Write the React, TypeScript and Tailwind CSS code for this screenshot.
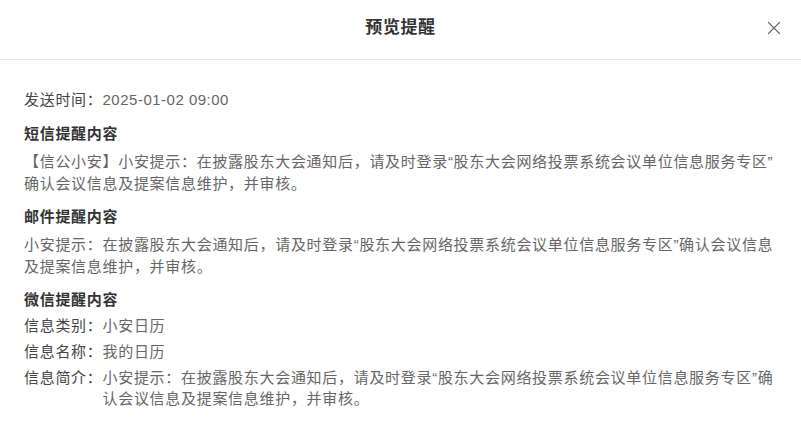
import { X } from "lucide-react";

const font = {
  fontFamily: '"Liberation Sans", "Noto Sans CJK SC", sans-serif',
};

const noticeHead = "小安提示：在披露股东大会通知后，请及时登录“股东大会网络投票系统会议单位信息服务专区”";
const noticeTail = "确认会议信息及提案信息维护，并审核。";

const Notice = () => (
  <>
    {noticeHead}
    <wbr />
    {noticeTail}
  </>
);

const wechatRows = [
  { label: "信息类别：", value: "小安日历" },
  { label: "信息名称：", value: "我的日历" },
  { label: "信息简介：", value: <Notice /> },
];

const SectionTitle = ({ children }: { children: string }) => (
  <div className="text-[15px] font-bold leading-[22px] text-[#333]">{children}</div>
);

const App = () => {
  return (
    <div className="h-[445px] w-[801px] bg-white tracking-[0.7px]" style={font}>
      <div className="relative flex h-[60px] justify-center border-b border-[#e8e8e8] pt-[17px]">
        <span className="text-[17px] font-bold leading-[22px] tracking-[0.6px] text-[#333]">预览提醒</span>
        <button className="absolute right-[16px] top-[17px] text-[#666]" aria-label="关闭">
          <X size={22} strokeWidth={1.2} />
        </button>
      </div>

      <div className="pl-6 pr-4 pt-[29px] text-[15px] leading-[22px]">
        <div className="text-[#444]">
          发送时间：<span className="tracking-[0.5px] text-[#666]">2025-01-02 09:00</span>
        </div>

        <div className="mt-[12px]">
          <SectionTitle>短信提醒内容</SectionTitle>
          <p className="mt-[6px] text-[#666]">
            【信公小安】
            <Notice />
          </p>
        </div>

        <div className="mt-[11px]">
          <SectionTitle>邮件提醒内容</SectionTitle>
          <p className="mt-[6px] text-[#666]">
            <Notice />
          </p>
        </div>

        <div className="mt-[11px]">
          <SectionTitle>微信提醒内容</SectionTitle>
          <div className="mt-[4px] flex flex-col gap-[5px] leading-[21px]">
            {wechatRows.map((row) => (
              <div key={row.label} className="flex">
                <span className="shrink-0 text-[#444]">{row.label}</span>
                <span className="text-[#666]">{row.value}</span>
              </div>
            ))}
          </div>
        </div>
      </div>
    </div>
  );
};

export default App;
